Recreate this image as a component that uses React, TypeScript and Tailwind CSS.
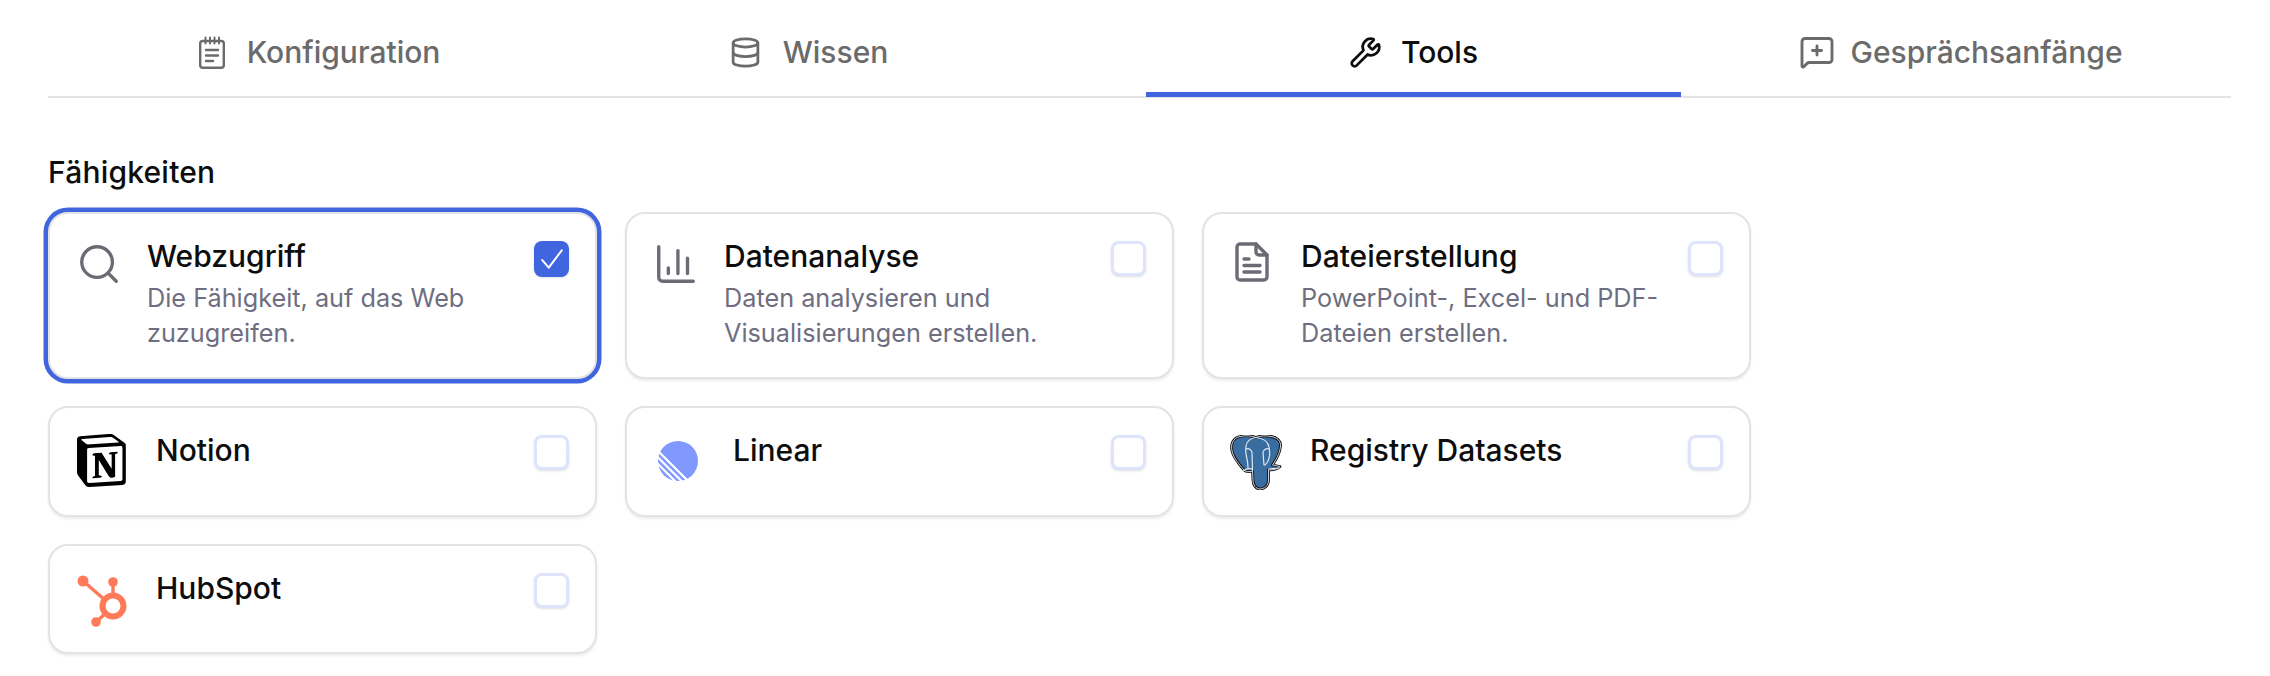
import { Database, Search, Wrench, MessageSquarePlus, ChartColumn } from 'lucide-react'
import type { ReactNode } from 'react'

function NotepadIcon() {
  return (
    <svg viewBox="0 0 26 33" className="h-[33px] w-[26px]" fill="none" stroke="#6b6b6b" strokeWidth="2.4" strokeLinecap="round">
      <rect x="1.2" y="5" width="23.6" height="26.8" rx="2.5" />
      <path d="M6.5 1.5v6M11 1.5v6M15.500 1.5v6M20 1.5v6" strokeWidth="2" />
      <path d="M7 14h12M7 19.5h12M7 25h7" />
    </svg>
  )
}

function FileIcon() {
  return (
    <svg viewBox="0 0 34 40" className="mt-px ml-[3px] h-[40px] w-[34px]" fill="none" stroke="#6b6b76" strokeWidth="3.4" strokeLinecap="round" strokeLinejoin="round">
      <path d="M5 2h16l11 11v22a3 3 0 0 1-3 3H5a3 3 0 0 1-3-3V5a3 3 0 0 1 3-3z" />
      <path d="M21 2v8a3 3 0 0 0 3 3h8" />
      <path d="M9 17h5M9 23.500h16M9 30h16" />
    </svg>
  )
}

function NotionLogo() {
  return (
    <svg viewBox="0 0 100 100" className="mt-[-1px] ml-px h-[53px] w-[51px]" preserveAspectRatio="none">
      <path fill="#fff" d="M6.017 4.313l55.333-4.087c6.797-.583 8.543-.19 12.817 2.917l17.663 12.443c2.913 2.14 3.883 2.723 3.883 5.053v68.243c0 4.277-1.553 6.807-6.99 7.193L24.467 99.967c-4.08.193-6.023-.39-8.16-3.113L3.3 79.94C.967 76.827 0 74.497 0 71.773V11.113c0-3.497 1.553-6.413 6.017-6.8z" />
      <path fill="#000" fillRule="evenodd" d="M61.35.227L6.017 4.313C1.553 4.7 0 7.617 0 11.113v60.66c0 2.723.967 5.053 3.3 8.167l13.007 16.913c2.137 2.723 4.08 3.307 8.16 3.113l64.257-3.89c5.433-.387 6.99-2.917 6.99-7.193V20.64c0-2.21-.873-2.847-3.443-4.733L74.167 3.143C69.894.036 68.147-.357 61.35.227zM25.92 19.523c-5.247.353-6.437.433-9.417-1.99L8.927 11.507c-.77-.78-.383-1.753 1.557-1.947l53.193-3.887c4.467-.39 6.793 1.167 8.54 2.527l9.123 6.61c.39.197 1.36 1.36.193 1.36l-54.933 3.307-.68.047zM19.803 88.3V30.367c0-2.53.777-3.697 3.103-3.893L86 22.78c2.14-.193 3.107 1.167 3.107 3.693v57.547c0 2.53-.39 4.67-3.883 4.863l-60.377 3.5c-3.493.193-5.043-.97-5.043-4.083zm59.6-54.827c.387 1.75 0 3.5-1.75 3.7l-2.91.577v42.773c-2.527 1.36-4.853 2.137-6.797 2.137-3.107 0-3.883-.973-6.21-3.887l-19.03-29.94v28.967l6.02 1.363s0 3.5-4.857 3.5l-13.39.777c-.39-.78 0-2.723 1.357-3.11l3.497-.97v-38.3L30.48 40.667c-.39-1.75.58-4.277 3.3-4.473l14.367-.967 19.8 30.327v-26.83l-5.047-.58c-.39-2.143 1.163-3.7 3.103-3.89l13.4-.78z" />
    </svg>
  )
}

function LinearLogo() {
  return (
    <svg viewBox="0 0 40 40" className="mt-[6px] ml-[5px] h-[40px] w-[40px]">
      <circle cx="20" cy="20" r="20" fill="#8199ff" />
      <g stroke="#fff" strokeWidth="2.200">
        <path d="M-2 8L32 42M-2 14.500L26 42.500M-2 21L19 42" />
      </g>
    </svg>
  )
}

const elephant =
  'M10 1.500C16 0 22 1 26 2.500C31 .5 36 .5 41 1.500C47 2.500 51 6 50.500 11C50 18 46 25 42.500 30L50 31.500C48 34 43 35 38.500 35L38.500 45C38.500 51 34 54 30 54C26 54 23 50 23 45L22.500 36C19 37 16 37 14 35C9 29 4 24 2 16C.5 9 3 3 10 1.500Z'

function PostgresLogo() {
  return (
    <svg viewBox="0 0 52 55" className="h-[55px] w-[52px]" fill="none">
      <path d={elephant} fill="#396c9f" stroke="#111" strokeWidth="2.800" strokeLinejoin="round" />
      <path d={elephant} stroke="#dfe9f2" strokeWidth="0.900" strokeLinejoin="round" />
      <g stroke="#dfe9f2" strokeWidth="1.200" strokeLinecap="round">
        <path d="M26 2.500C21 3 17 6 16 11C15 17 16 20 17 24C18 28 18 31 18 33" />
        <path d="M26 2.500C32 3 38 6 39 12C40 17 40 22 38 26C37 28 36 29 35 30" />
        <path d="M16 14C19 13 22 15 22 18L22.500 36M39 14C36 13 33 15 33 18L34 30" />
        <path d="M13 36C16 34 19 33 22 34M38.500 34L49 33" />
      </g>
    </svg>
  )
}

function HubspotLogo() {
  return (
    <svg viewBox="0 0 50 52" className="mt-[2px] ml-px h-[52px] w-[50px]" fill="none">
      <circle cx="6" cy="6" r="5.500" fill="#ff7a59" />
      <circle cx="36" cy="7" r="4.800" fill="#ff7a59" />
      <circle cx="19" cy="47" r="4.800" fill="#ff7a59" />
      <path d="M6 6l22 19M36 7v14M19 47l11-10" stroke="#ff7a59" strokeWidth="3.400" />
      <circle cx="36" cy="31" r="10.500" stroke="#ff7a59" strokeWidth="6" />
    </svg>
  )
}

function Tab({ icon, label, active, className }: { icon: ReactNode; label: string; active?: boolean; className?: string }) {
  return (
    <div className={active ? 'flex h-[97px] justify-center gap-[19px] border-b-[5px] border-[#4065df] pt-[36px] text-[#0d0d0d]' : `flex h-[97px] justify-center pt-[36px] text-[#6b6b6b] ${className ?? ''}`}>
      {icon}
      <span className="text-[30px] leading-[33px] font-medium">{label}</span>
    </div>
  )
}

function Check({ on }: { on?: boolean }) {
  if (on) {
    return (
      <div className="flex h-[36px] w-[35px] shrink-0 items-center justify-center rounded-[8px] bg-[#4065df] shadow-sm">
        <svg viewBox="0 0 24 24" className="h-[26px] w-[26px]" fill="none" stroke="#fff" strokeWidth="1.800" strokeLinecap="round" strokeLinejoin="round">
          <path d="M3 13l6 7L21 4" />
        </svg>
      </div>
    )
  }
  return <div className="h-[35px] w-[35px] shrink-0 rounded-[8px] border-[3px] border-[#dde4fc] bg-white shadow-sm" />
}

function Card({ icon, title, desc, on, iconClass }: { icon: ReactNode; title: string; desc?: string; on?: boolean; iconClass: string }) {
  return (
    <div className={on ? 'flex items-start rounded-[20px] border-2 border-[#e3e3e3] bg-white pt-[27px] pr-[26px] shadow-[0_0_0_4.500px_#4065df]' : 'flex items-start rounded-[20px] border-2 border-[#e3e3e3] bg-white pt-[27px] pr-[26px] shadow-[0_2px_3px_rgba(0,0,0,0.08)]'}>
      <div className={iconClass}>{icon}</div>
      <div className="mt-[-3px] min-w-0 flex-1">
        <div className="text-[30px] leading-[36px] font-medium text-[#0d0d0d]">{title}</div>
        {desc && <div className="mt-[7px] w-[380px] text-[25.250px] leading-[35px] text-[#6e6e80]">{desc}</div>}
      </div>
      <Check on={on} />
    </div>
  )
}

export default function App() {
  const iconRow1 = 'ml-[28px] w-[69px] shrink-0'
  const iconRow2 = 'ml-[26px] w-[80px] shrink-0'
  const lineIcon = 'ml-[-2px] h-[46px] w-[46px] text-[#6b6b76]'

  return (
    <div className="min-h-[676px] bg-white px-[48px] font-['Inter',sans-serif]">
      <div className="w-[2183px] border-b-2 border-[#e3e3e3]">
        <div className="mb-[-1px] grid grid-cols-[repeat(4,535px)] gap-x-[14px]">
          <Tab label="Konfiguration" className="gap-[22px] pl-[8px]" icon={<NotepadIcon />} />
          <Tab label="Wissen" className="gap-[21px] pr-[112px]" icon={<Database className="h-[33px] w-[33px]" strokeWidth={2} />} />
          <Tab label="Tools" active icon={<Wrench className="h-[33px] w-[33px]" strokeWidth={2} />} />
          <Tab label="Gesprächsanfänge" className="gap-[15px] pr-[3px]" icon={<MessageSquarePlus className="mt-[-2px] h-[36px] w-[36px]" strokeWidth={1.9} />} />
        </div>
      </div>

      <div className="mt-[56px] text-[30px] leading-[36px] font-medium tracking-[0.2px] text-[#0d0d0d]">Fähigkeiten</div>

      <div className="mt-[22px] grid grid-cols-[repeat(3,549px)] grid-rows-[167px_111px_110px] gap-x-[28px] gap-y-[27px]">
        <Card
          on
          title="Webzugriff"
          desc="Die Fähigkeit, auf das Web zuzugreifen."
          iconClass={iconRow1}
          icon={<Search className={lineIcon} strokeWidth={1.75} />}
        />
        <Card
          title="Datenanalyse"
          desc="Daten analysieren und Visualisierungen erstellen."
          iconClass={iconRow1}
          icon={<ChartColumn className={lineIcon} strokeWidth={1.75} />}
        />
        <Card
          title="Dateierstellung"
          desc="PowerPoint-, Excel- und PDF-Dateien erstellen."
          iconClass={iconRow1}
          icon={<FileIcon />}
        />
        <Card title="Notion" iconClass={iconRow2} icon={<NotionLogo />} />
        <Card title="Linear" iconClass={iconRow2} icon={<LinearLogo />} />
        <Card title="Registry Datasets" iconClass={iconRow2} icon={<PostgresLogo />} />
        <Card title="HubSpot" iconClass={iconRow2} icon={<HubspotLogo />} />
      </div>
    </div>
  )
}
